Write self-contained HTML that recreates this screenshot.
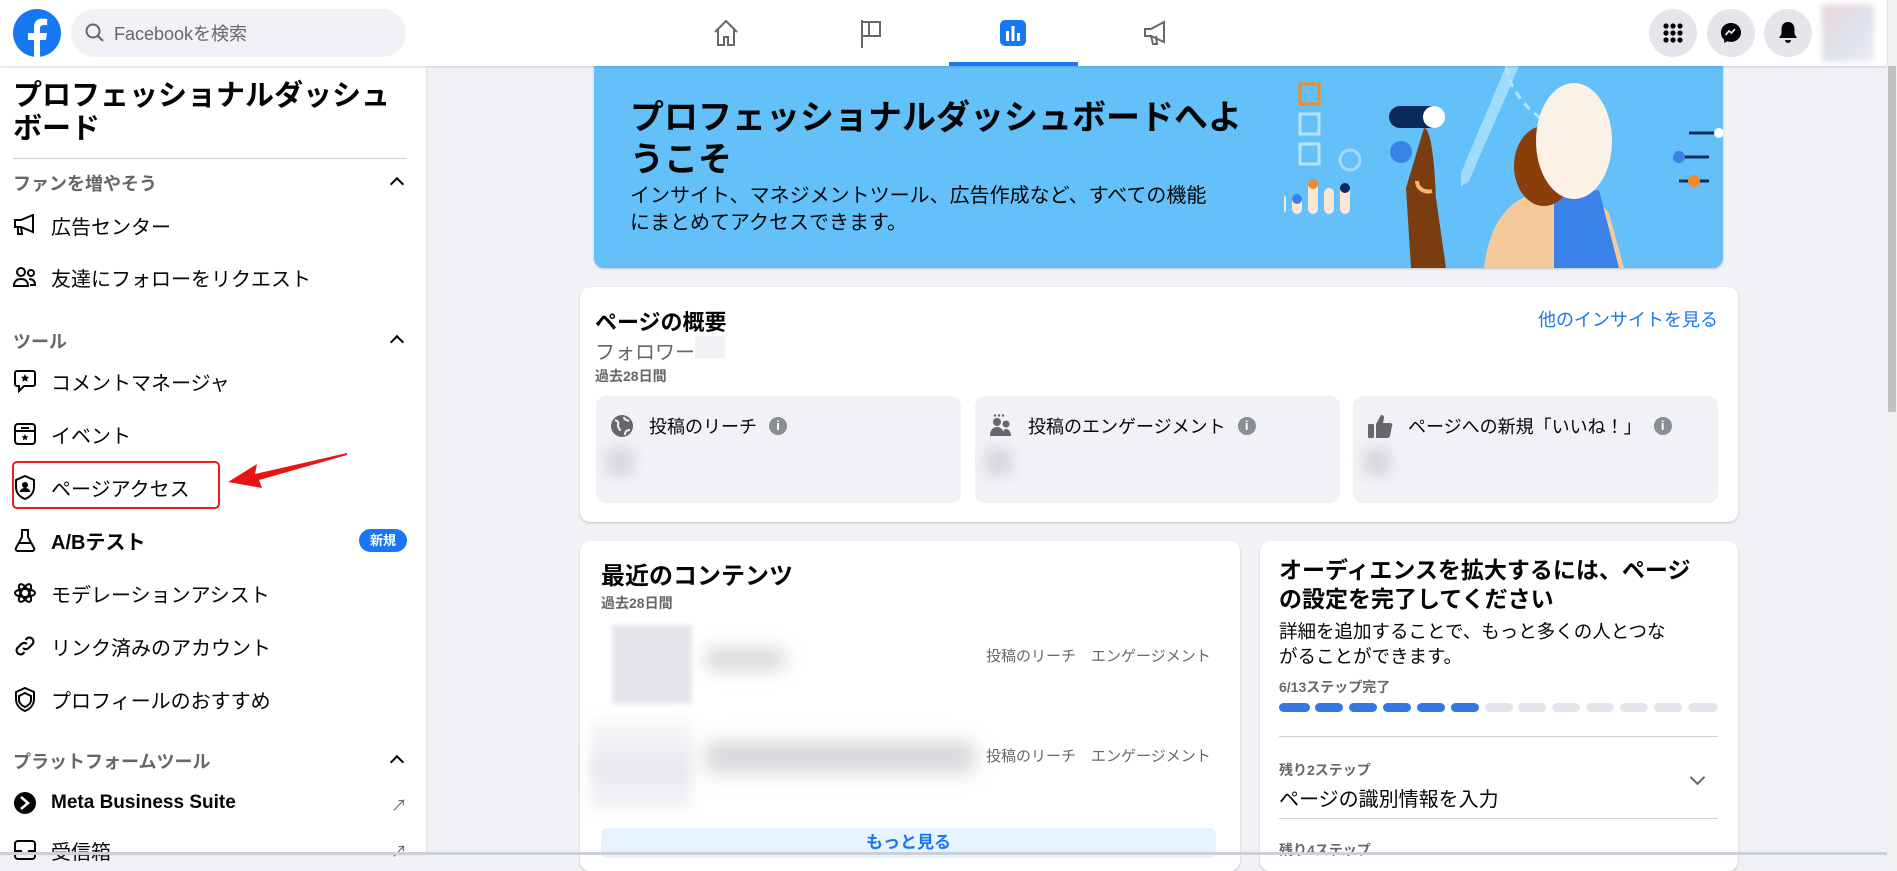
<!DOCTYPE html>
<html><head><meta charset="utf-8"><style>
*{box-sizing:border-box;margin:0;padding:0}
body{width:1897px;height:855px;overflow:hidden;background:#f0f2f5;font-family:"Liberation Sans","Noto Sans CJK JP",sans-serif;color:#050505;position:relative}
.abs{position:absolute}
.hdr{left:0;top:0;width:1887px;height:66px;background:#fff;box-shadow:0 1px 2px rgba(0,0,0,.15);z-index:5}
.side{left:0;top:66px;width:426px;height:789px;background:#fff;box-shadow:1px 0 2px rgba(0,0,0,.08)}
.item{position:absolute;left:13px;font-size:20px;color:#050505;display:flex;align-items:center;height:30px}
.item svg{margin-right:14px}
.sec{position:absolute;left:13px;font-size:18px;font-weight:bold;color:#65676b}
.chev{position:absolute;left:392px;width:10px;height:10px;border-left:2.5px solid #050505;border-top:2.5px solid #050505;transform:rotate(45deg)}
.card{position:absolute;background:#fff;border-radius:10px;box-shadow:0 1px 2px rgba(0,0,0,.2)}
.box{position:absolute;top:396px;height:107px;width:365px;background:#f0f2f5;border-radius:10px}
.lbl{position:absolute;top:17px;font-size:18px;display:flex;align-items:center}
.info{display:inline-block;width:18px;height:18px;border-radius:50%;background:#8a8d91;color:#fff;font-size:13px;font-weight:bold;text-align:center;line-height:18px;margin-left:12px}
.blur{position:absolute;background:#d8d9dc;filter:blur(6px);border-radius:8px}
.seg{position:absolute;top:703px;height:9px;width:28px;border-radius:5px;background:#e4e6eb}
.circ{position:absolute;top:9px;width:48px;height:48px;border-radius:50%;background:#e4e6eb}
</style></head><body>

<div class="abs hdr">
  <svg class="abs" style="left:13px;top:9px" width="48" height="48" viewBox="0 0 48 48"><circle cx="24" cy="24" r="24" fill="#1877f2"/><path d="M27 48V31h6l1-7h-7v-4.5c0-2 1-3.5 4-3.5h3.2V10c-1.2-.2-3-.4-5-.4-5.3 0-8.2 3.2-8.2 8.6V24h-6v7h6v17z" fill="#fff"/></svg>
  <div class="abs" style="left:71px;top:9px;width:335px;height:48px;border-radius:24px;background:#f0f2f5"></div>
  <svg class="abs" style="left:85px;top:22px" width="20" height="22" viewBox="0 0 20 22"><circle cx="8" cy="9" r="6.5" fill="none" stroke="#65676b" stroke-width="2"/><path d="M13 14l5 5" stroke="#65676b" stroke-width="2.2"/></svg>
  <div class="abs" style="left:114px;top:20px;font-size:18px;color:#65676b">Facebookを検索</div>

  <svg class="abs" style="left:712px;top:18px" width="28" height="30" viewBox="0 0 28 30"><path d="M3 14L14 3l11 11M6 11v16h6v-8h4v8h6V11" fill="none" stroke="#65676b" stroke-width="2"/></svg>
  <svg class="abs" style="left:858px;top:18px" width="26" height="32" viewBox="0 0 26 32"><path d="M4 2v28M4 4h18v14H4" fill="none" stroke="#65676b" stroke-width="2"/><path d="M4 4h7v14" fill="none" stroke="#65676b" stroke-width="2"/></svg>
  <svg class="abs" style="left:999px;top:19px" width="28" height="28" viewBox="0 0 28 28"><rect x="1" y="1" width="26" height="26" rx="5" fill="#1877f2"/><rect x="7" y="12" width="3" height="10" fill="#fff"/><rect x="12.5" y="7" width="3" height="15" fill="#fff"/><rect x="18" y="14" width="3" height="8" fill="#fff"/></svg>
  <div class="abs" style="left:949px;top:62px;width:129px;height:4px;background:#1877f2"></div>
  <svg class="abs" style="left:1142px;top:19px" width="28" height="28" viewBox="0 0 28 28"><path d="M3 10h6l13-7v20L9 17H3z M9 17l2 8h4l-1-8" fill="none" stroke="#65676b" stroke-width="2"/></svg>

  <div class="circ" style="left:1649px"></div>
  <svg class="abs" style="left:1662px;top:22px" width="22" height="22" viewBox="0 0 22 22" fill="#050505"><circle cx="4" cy="4" r="2.6"/><circle cx="11" cy="4" r="2.6"/><circle cx="18" cy="4" r="2.6"/><circle cx="4" cy="11" r="2.6"/><circle cx="11" cy="11" r="2.6"/><circle cx="18" cy="11" r="2.6"/><circle cx="4" cy="18" r="2.6"/><circle cx="11" cy="18" r="2.6"/><circle cx="18" cy="18" r="2.6"/></svg>
  <div class="circ" style="left:1707px"></div>
  <svg class="abs" style="left:1720px;top:22px" width="22" height="22" viewBox="0 0 22 22"><path d="M11 1C5.4 1 1 5.1 1 10.6c0 2.9 1.2 5.4 3.2 7.1V21l3-1.7c1.2.4 2.5.6 3.8.6 5.6 0 10-4.1 10-9.4S16.6 1 11 1z" fill="#050505"/><path d="M5.5 13l3.5-4 2.5 2 3.5-4-3.5 4-2.5-2z" stroke="#fff" stroke-width="1.6" fill="none"/></svg>
  <div class="circ" style="left:1764px"></div>
  <svg class="abs" style="left:1777px;top:21px" width="22" height="24" viewBox="0 0 22 24"><path d="M11 1c-4 0-6.5 3-6.5 7v5L2 17h18l-2.5-4V8c0-4-2.5-7-6.5-7z M8 19a3 3 0 006 0z" fill="#050505"/></svg>
  <div class="abs" style="left:1822px;top:4px;width:52px;height:58px;background:linear-gradient(135deg,#e9d6d8,#dfe1ea 50%,#eceef3);filter:blur(3px)"></div>
</div>
<div class="abs" style="left:1887px;top:0;width:10px;height:855px;background:#f1f1f1"></div>
<div class="abs" style="left:1888px;top:66px;width:8px;height:346px;background:#c1c1c1"></div>

<div class="abs side">
  <div class="abs" style="left:13px;top:14px;font-size:29px;font-weight:bold;line-height:33px;width:400px">プロフェッショナルダッシュ<br>ボード</div>
  <div class="abs" style="left:13px;top:92px;width:394px;height:1px;background:#ced0d4"></div>
</div>
<div class="sec" style="top:170px">ファンを増やそう</div><div class="chev" style="top:179px"></div>
<div class="item" style="top:210px"><svg width="24" height="22" viewBox="0 0 24 22"><path d="M2 6h6l12-5v17L8 13H2z M5 13v7h4l-1-7" fill="none" stroke="#050505" stroke-width="2"/></svg>広告センター</div>
<div class="item" style="top:262px"><svg width="24" height="22" viewBox="0 0 24 22"><circle cx="8" cy="6" r="4" fill="none" stroke="#050505" stroke-width="2"/><circle cx="18" cy="7" r="3" fill="none" stroke="#050505" stroke-width="2"/><path d="M1 20c0-5 3-7 7-7s7 2 7 7z M16 13c4 0 6 2 6 6h-5" fill="none" stroke="#050505" stroke-width="2"/></svg>友達にフォローをリクエスト</div>
<div class="sec" style="top:328px">ツール</div><div class="chev" style="top:337px"></div>
<div class="item" style="top:366px"><svg width="24" height="24" viewBox="0 0 24 24"><path d="M4 2h16a2 2 0 012 2v11a2 2 0 01-2 2H11l-5 5v-5H4a2 2 0 01-2-2V4a2 2 0 012-2z" fill="none" stroke="#050505" stroke-width="2"/><path d="M12 5l1.2 2.6 2.8.3-2 2 .6 2.8L12 11.3l-2.6 1.4.6-2.8-2-2 2.8-.3z" fill="#050505"/></svg>コメントマネージャ</div>
<div class="item" style="top:419px"><svg width="24" height="24" viewBox="0 0 24 24"><rect x="2" y="2" width="20" height="20" rx="3" fill="none" stroke="#050505" stroke-width="2"/><path d="M2 9h20M8 6h8" stroke="#050505" stroke-width="2"/><path d="M12 12l1 2.2 2.4.2-1.8 1.6.6 2.4L12 17.1l-2.2 1.3.6-2.4-1.8-1.6 2.4-.2z" fill="#050505"/></svg>イベント</div>
<div class="abs" style="left:12px;top:461px;width:208px;height:48px;border:2px solid #e82020;border-radius:5px"></div>
<div class="item" style="top:472px"><svg width="24" height="26" viewBox="0 0 24 26"><path d="M12 2l9 4v7c0 6-4 10-9 12-5-2-9-6-9-12V6z" fill="none" stroke="#050505" stroke-width="2"/><circle cx="12" cy="11" r="3" fill="#050505"/><path d="M6.5 18c1-3 3-4 5.5-4s4.5 1 5.5 4z" fill="#050505"/></svg>ページアクセス</div>
<svg class="abs" style="left:225px;top:448px" width="125" height="45" viewBox="0 0 125 45"><path d="M122 5L30 26l2-10L3 34l34 6-3-8 88-25z" fill="#e81515"/></svg>
<div class="item" style="top:525px;font-weight:bold"><svg width="24" height="24" viewBox="0 0 24 24"><path d="M8 2h8M9 2v7L3 20a2 2 0 002 3h14a2 2 0 002-3L15 9V2" fill="none" stroke="#050505" stroke-width="2"/><path d="M6 15h12" stroke="#050505" stroke-width="2"/></svg>A/Bテスト</div>
<div class="abs" style="left:359px;top:529px;width:48px;height:23px;border-radius:12px;background:#1877f2;color:#fff;font-size:13px;font-weight:bold;text-align:center;line-height:23px">新規</div>
<div class="item" style="top:578px"><svg width="24" height="24" viewBox="0 0 24 24" fill="none" stroke="#050505" stroke-width="2"><ellipse cx="12" cy="12" rx="10" ry="4"/><ellipse cx="12" cy="12" rx="10" ry="4" transform="rotate(60 12 12)"/><ellipse cx="12" cy="12" rx="10" ry="4" transform="rotate(120 12 12)"/></svg>モデレーションアシスト</div>
<div class="item" style="top:631px"><svg width="24" height="24" viewBox="0 0 24 24" fill="none" stroke="#050505" stroke-width="2.2"><path d="M10 14a4 4 0 005.6 0l4-4a4 4 0 00-5.6-5.6l-1.5 1.5M14 10a4 4 0 00-5.6 0l-4 4a4 4 0 005.6 5.6l1.5-1.5"/></svg>リンク済みのアカウント</div>
<div class="item" style="top:684px"><svg width="24" height="26" viewBox="0 0 24 26" fill="none" stroke="#050505" stroke-width="2"><path d="M12 2l9 4v7c0 6-4 10-9 12-5-2-9-6-9-12V6z"/><path d="M12 7l6 3v4c0 3-3 6-6 7-3-1-6-4-6-7v-4z"/></svg>プロフィールのおすすめ</div>
<div class="sec" style="top:748px">プラットフォームツール</div><div class="chev" style="top:757px"></div>
<div class="item" style="top:788px;font-weight:bold;font-size:19px"><svg width="24" height="24" viewBox="0 0 24 24"><circle cx="12" cy="12" r="11" fill="#050505"/><path d="M8 6l7 6-7 6" fill="none" stroke="#fff" stroke-width="2.5"/></svg>Meta Business Suite</div>
<div class="abs" style="left:391px;top:792px;font-size:16px;color:#65676b">↗</div>
<div class="item" style="top:835px"><svg width="24" height="24" viewBox="0 0 24 24" fill="none" stroke="#050505" stroke-width="2"><rect x="2" y="3" width="20" height="18" rx="3"/><path d="M2 13h6l1 3h6l1-3h6"/></svg>受信箱</div>
<div class="abs" style="left:391px;top:838px;font-size:16px;color:#65676b">↗</div>

<!-- Banner -->
<div class="abs" style="left:594px;top:66px;width:1129px;height:202px;background:#63c0f9;border-radius:0 0 10px 10px;overflow:hidden;box-shadow:0 1px 2px rgba(0,0,0,.2)">
  <div class="abs" style="left:36px;top:31px;font-size:34px;font-weight:bold;line-height:42px;width:640px">プロフェッショナルダッシュボードへよ<br>うこそ</div>
  <div class="abs" style="left:36px;top:117px;font-size:20px;line-height:27px">インサイト、マネジメントツール、広告作成など、すべての機能<br>にまとめてアクセスできます。</div>
  <svg class="abs" style="left:690px;top:0" width="439" height="202" viewBox="0 0 439 202">
    <path d="M235 0l-50 115-8 6 0-14 45-107z" fill="#9fdcfb"/>
    <rect x="16" y="18" width="19" height="20" fill="none" stroke="#f08a2a" stroke-width="3"/>
    <rect x="16" y="48" width="19" height="20" fill="none" stroke="#b6e4fb" stroke-width="3"/>
    <rect x="16" y="78" width="19" height="20" fill="none" stroke="#b6e4fb" stroke-width="3"/>
    <path d="M222 0c5 30 30 55 60 65" fill="none" stroke="#b6e4fb" stroke-width="3" stroke-dasharray="8 6"/>
    <rect x="105" y="40" width="55" height="22" rx="11" fill="#0c2b5a"/><circle cx="150" cy="51" r="11" fill="#fff"/>
    <circle cx="117" cy="86" r="11" fill="#3b82e8"/>
    <path d="M140 62c10 0 12 70 12 70l10 70h-35l-5-80z" fill="#7a3d0f"/>
    <path d="M133 115c0 8 8 12 15 10" fill="none" stroke="#f4b76b" stroke-width="4"/>
    <path d="M200 202c5-40 20-65 50-75 30-8 60 0 75 20l15 55z" fill="#f6c99a"/>
    <path d="M270 128l45-4 20 78h-65z" fill="#3b82e8"/>
    <ellipse cx="260" cy="100" rx="30" ry="40" fill="#8a3f0b"/>
    <ellipse cx="290" cy="75" rx="38" ry="58" fill="#fbf1e6"/>
    <circle cx="66" cy="94" r="10" fill="none" stroke="#a9d8f7" stroke-width="3"/>
    <rect x="-8" y="128" width="10" height="20" rx="5" fill="#fde7d1"/>
    <rect x="8" y="128" width="10" height="20" rx="5" fill="#fde7d1"/><circle cx="13" cy="133" r="5" fill="#3b82e8"/>
    <rect x="24" y="115" width="10" height="33" rx="5" fill="#fde7d1"/><circle cx="29" cy="118" r="5" fill="#f08a2a"/>
    <rect x="40" y="122" width="10" height="26" rx="5" fill="#fde7d1"/>
    <rect x="56" y="120" width="10" height="28" rx="5" fill="#fde7d1"/><circle cx="61" cy="122" r="5" fill="#0c2b5a"/>
    <path d="M405 67h30M395 91h30M395 115h30" stroke="#0c2b5a" stroke-width="3"/>
    <circle cx="435" cy="67" r="5" fill="#fff"/><circle cx="395" cy="91" r="6" fill="#3b82e8"/><circle cx="410" cy="115" r="6" fill="#f08a2a"/>
  </svg>
</div>

<!-- Overview card -->
<div class="card" style="left:580px;top:287px;width:1158px;height:235px"></div>
<div class="abs" style="left:595px;top:305px;font-size:22px;font-weight:bold">ページの概要</div>
<div class="abs" style="left:1533px;top:306px;font-size:18px;color:#1877f2;width:185px;text-align:right">他のインサイトを見る</div>
<div class="abs" style="left:595px;top:336px;font-size:20px;color:#65676b">フォロワー</div>
<div class="abs" style="left:695px;top:336px;width:30px;height:22px;background:#f0f2f5"></div>
<div class="abs" style="left:595px;top:366px;font-size:14px;font-weight:bold;color:#65676b">過去28日間</div>
<div class="box" style="left:596px"><div class="lbl" style="left:14px"><svg width="24" height="24" viewBox="0 0 24 24"><circle cx="12" cy="12" r="11" fill="#65676b"/><path d="M5 6c3 1 4 3 3 5s2 3 2 6M14 3c0 3 3 3 5 4M15 21c0-4 2-5 5-5" fill="none" stroke="#f0f2f5" stroke-width="2"/></svg><span style="margin-left:15px">投稿のリーチ</span><span class="info">i</span></div></div>
<div class="box" style="left:975px"><div class="lbl" style="left:14px"><svg width="24" height="24" viewBox="0 0 24 24" fill="#65676b"><circle cx="8" cy="8" r="4"/><circle cx="17" cy="10" r="3.5"/><path d="M1 22c0-6 3-9 7-9s7 3 7 9zM13 22c1-5 2-7 4-7s5 2 5 7z"/><circle cx="6" cy="1.5" r="1.2"/><circle cx="10" cy="1.5" r="1.2"/><circle cx="14" cy="1.5" r="1.2"/></svg><span style="margin-left:15px">投稿のエンゲージメント</span><span class="info">i</span></div></div>
<div class="box" style="left:1353px"><div class="lbl" style="left:14px"><svg width="26" height="26" viewBox="0 0 26 26" fill="#65676b"><rect x="1" y="11" width="6" height="14" rx="1"/><path d="M9 11l5-9c2 0 3 1 3 3l-1 5h7c2 0 3 2 2 3l-2 10c-.3 1.5-1.5 2-3 2H9z"/></svg><span style="margin-left:15px">ページへの新規「いいね！」</span><span class="info">i</span></div></div>
<div class="blur" style="left:606px;top:448px;width:28px;height:28px"></div>
<div class="blur" style="left:985px;top:448px;width:28px;height:28px"></div>
<div class="blur" style="left:1363px;top:448px;width:28px;height:28px"></div>

<!-- Recent content -->
<div class="card" style="left:580px;top:541px;width:660px;height:330px"></div>
<div class="abs" style="left:601px;top:556px;font-size:24px;font-weight:bold">最近のコンテンツ</div>
<div class="abs" style="left:601px;top:593px;font-size:14px;font-weight:bold;color:#65676b">過去28日間</div>
<div class="abs" style="left:612px;top:625px;width:80px;height:79px;background:#e6e7eb;filter:blur(2px)"></div>
<div class="blur" style="left:705px;top:648px;width:80px;height:22px;background:#d6d7da;filter:blur(9px)"></div>
<div class="abs" style="left:590px;top:717px;width:102px;height:95px;background:linear-gradient(#fafafa,#e6e8ef 55%,#f7f7f7);filter:blur(6px)"></div>
<div class="blur" style="left:705px;top:742px;width:270px;height:30px;background:#d4d5d8;filter:blur(10px)"></div>
<div class="abs" style="left:986px;top:645px;font-size:15px;color:#65676b">投稿のリーチ　エンゲージメント</div>
<div class="abs" style="left:986px;top:745px;font-size:15px;color:#65676b">投稿のリーチ　エンゲージメント</div>
<div class="abs" style="left:601px;top:828px;width:615px;height:30px;background:#e7f3ff;border-radius:6px;color:#1877f2;font-size:17px;font-weight:bold;text-align:center;line-height:30px">もっと見る</div>

<!-- Audience card -->
<div class="card" style="left:1260px;top:541px;width:478px;height:330px"></div>
<div class="abs" style="left:1279px;top:556px;font-size:23px;font-weight:bold;line-height:29px;width:440px">オーディエンスを拡大するには、ページ<br>の設定を完了してください</div>
<div class="abs" style="left:1279px;top:619px;font-size:18.5px;line-height:25px;width:440px">詳細を追加することで、もっと多くの人とつな<br>がることができます。</div>
<div class="abs" style="left:1279px;top:677px;font-size:14px;font-weight:bold;color:#65676b">6/13ステップ完了</div>
<div class="seg" style="left:1279px;background:#3578e5;width:31px"></div>
<div class="seg" style="left:1315px;background:#3578e5"></div>
<div class="seg" style="left:1349px;background:#3578e5"></div>
<div class="seg" style="left:1383px;background:#3578e5"></div>
<div class="seg" style="left:1417px;background:#3578e5"></div>
<div class="seg" style="left:1451px;background:#3578e5"></div>
<div class="seg" style="left:1485px"></div><div class="seg" style="left:1518px"></div><div class="seg" style="left:1552px"></div><div class="seg" style="left:1586px"></div><div class="seg" style="left:1620px"></div><div class="seg" style="left:1654px"></div><div class="seg" style="left:1688px;width:30px"></div>
<div class="abs" style="left:1279px;top:736px;width:439px;height:1px;background:#ced0d4"></div>
<div class="abs" style="left:1279px;top:760px;font-size:14px;font-weight:bold;color:#65676b">残り2ステップ</div>
<div class="abs" style="left:1279px;top:783px;font-size:20px">ページの識別情報を入力</div>
<div class="abs" style="left:1692px;top:772px;width:11px;height:11px;border-right:2.5px solid #65676b;border-bottom:2.5px solid #65676b;transform:rotate(45deg)"></div>
<div class="abs" style="left:1279px;top:818px;width:439px;height:1px;background:#ced0d4"></div>
<div class="abs" style="left:1279px;top:840px;font-size:14px;font-weight:bold;color:#65676b">残り4ステップ</div>

<div class="abs" style="left:0;top:852px;width:1887px;height:3px;background:#cdd0d8"></div>
</body></html>
